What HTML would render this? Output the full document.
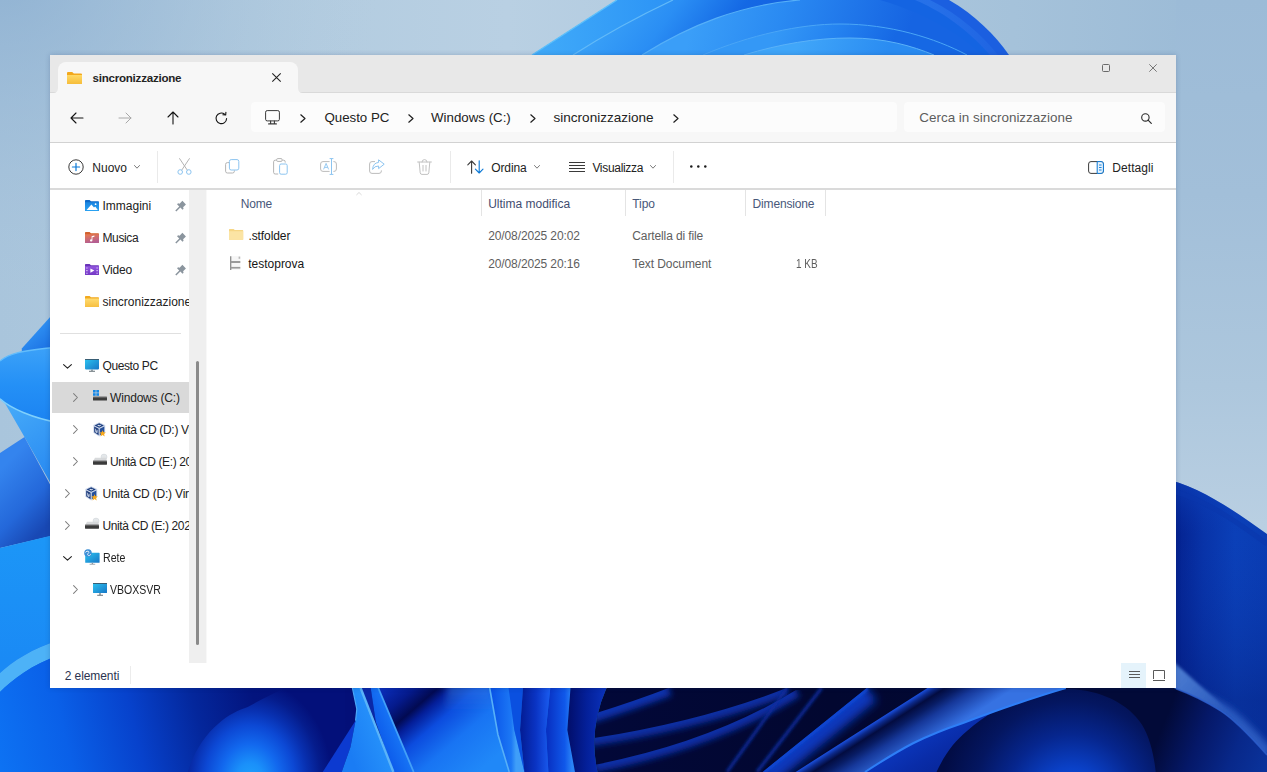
<!DOCTYPE html>
<html>
<head>
<meta charset="utf-8">
<title>sincronizzazione</title>
<style>
*{box-sizing:border-box;margin:0;padding:0}
html,body{width:1267px;height:772px;overflow:hidden}
body{position:relative;background:#aac6dd;font-family:"Liberation Sans",sans-serif;font-size:12px;color:#222}
.abs{position:absolute}
#wall{position:absolute;left:0;top:0}
#win{position:absolute;left:50px;top:55px;width:1126px;height:633px;background:#fff;overflow:hidden;box-shadow:0 0 5px rgba(20,40,90,0.22)}
#titlebar{position:absolute;left:0;top:0;width:1126px;height:37px;background:#e8e8e8}
#tab{position:absolute;left:8px;top:7px;width:240px;height:32px;background:#f7f7f7;border-radius:8px 8px 0 0}
#navbar{position:absolute;left:0;top:37px;width:1126px;height:51px;background:#f7f7f7;border-top:1px solid #d9d9d9;border-bottom:1px solid #d2d2d2}
#toolbar{position:absolute;left:0;top:88px;width:1126px;height:47px;background:#fff;border-bottom:2px solid #dadada}
.t{position:absolute;white-space:pre;line-height:1}
.side .t{color:#222}
svg{position:absolute;overflow:visible}
</style>
</head>
<body>
<svg id="wall" width="1267" height="772" viewBox="0 0 1267 772">
<defs>
<linearGradient id="bg" x1="0" y1="0" x2="1" y2="0">
<stop offset="0" stop-color="#a9c5dc"/><stop offset="0.2" stop-color="#b1cbdf"/><stop offset="0.4" stop-color="#b9d0e3"/><stop offset="0.8" stop-color="#a5c2da"/><stop offset="0.93" stop-color="#9dbcd7"/><stop offset="1" stop-color="#9cbbd7"/>
</linearGradient>
<radialGradient id="bgV" gradientUnits="userSpaceOnUse" cx="0" cy="-40" r="380"><stop offset="0" stop-color="#86abcf" stop-opacity="0.75"/><stop offset="0.45" stop-color="#94b5d4" stop-opacity="0.4"/><stop offset="1" stop-color="#b0c8de" stop-opacity="0"/></radialGradient>
<linearGradient id="bgR" x1="0" y1="0" x2="0" y2="1"><stop offset="0" stop-color="#9cbbd7"/><stop offset="0.25" stop-color="#a2bfd9"/><stop offset="0.5" stop-color="#adc7dd"/><stop offset="0.68" stop-color="#b9cfe2"/><stop offset="1" stop-color="#b9cfe2"/></linearGradient>
<linearGradient id="tp1" gradientUnits="userSpaceOnUse" x1="540" y1="0" x2="1000" y2="0"><stop offset="0" stop-color="#40aaf9"/><stop offset="0.25" stop-color="#2e96f6"/><stop offset="0.6" stop-color="#2478ec"/><stop offset="0.85" stop-color="#2670e8"/><stop offset="1" stop-color="#1f64e2"/></linearGradient>
<linearGradient id="tp2" gradientUnits="userSpaceOnUse" x1="610" y1="5" x2="720" y2="85"><stop offset="0" stop-color="#3aa2f8"/><stop offset="0.4" stop-color="#2a8ef4"/><stop offset="0.8" stop-color="#1468e4"/><stop offset="1" stop-color="#1464e2"/></linearGradient>
<linearGradient id="tp3" gradientUnits="userSpaceOnUse" x1="700" y1="0" x2="900" y2="60"><stop offset="0" stop-color="#3a9ef8"/><stop offset="0.4" stop-color="#2a8af2"/><stop offset="1" stop-color="#1664e2"/></linearGradient>
<linearGradient id="tp4" gradientUnits="userSpaceOnUse" x1="780" y1="24" x2="880" y2="70"><stop offset="0" stop-color="#3498f6"/><stop offset="0.5" stop-color="#2482f0"/><stop offset="1" stop-color="#1668e4"/></linearGradient>
<linearGradient id="tp5" gradientUnits="userSpaceOnUse" x1="800" y1="38" x2="880" y2="70"><stop offset="0" stop-color="#40a6f9"/><stop offset="1" stop-color="#2a8cf2"/></linearGradient>
</defs>
<rect width="1267" height="772" fill="url(#bg)"/>
<rect x="1176" y="0" width="91" height="772" fill="url(#bgR)"/>
<rect x="0" y="0" width="500" height="450" fill="url(#bgV)"/>
<!-- top bloom -->
<path d="M532,55 L617,0 L949,0 C975,15 995,35 1009,55 Z" fill="#1b5fe0"/>
<path d="M532,55 L617,0 L930,0 C960,15 982,35 998,55 Z" fill="url(#tp1)"/>
<path d="M573,55 Q620,25 673,0 L915,0 C950,15 972,35 990,55 Z" fill="url(#tp2)"/>
<path d="M642,55 C690,25 740,5 800,0 L 880,0 C930,15 960,35 982,55 Z" fill="url(#tp3)"/>
<path d="M703,55 C750,35 800,24 840,24 C890,24 935,38 967,55 Z" fill="url(#tp4)"/>
<path d="M744,55 C780,44 815,38 850,38 C885,38 912,46 934,55 Z" fill="url(#tp5)"/>
<path d="M573,55 Q620,25 673,0" fill="none" stroke="#62baf9" stroke-width="1.2"/>
<path d="M642,55 C690,25 740,5 800,0" fill="none" stroke="#56b0f8" stroke-width="1.2"/>
<path d="M703,55 C750,35 800,24 840,24 C890,24 935,38 967,55" fill="none" stroke="#4aa6f7" stroke-width="1"/>
<path d="M744,55 C780,44 815,38 850,38 C885,38 912,46 934,55" fill="none" stroke="#5ab2f9" stroke-width="1"/>
<path d="M532,55 L617,0" fill="none" stroke="#5cc0fb" stroke-width="1.4"/>
<g id="bottom">
<defs>
<linearGradient id="bA" gradientUnits="userSpaceOnUse" x1="0" y1="765" x2="340" y2="685">
<stop offset="0" stop-color="#0d72f3"/><stop offset="0.2" stop-color="#0a60e8"/><stop offset="0.4" stop-color="#0742cc"/><stop offset="0.58" stop-color="#04279c"/><stop offset="0.75" stop-color="#03147e"/><stop offset="1" stop-color="#030f78"/>
</linearGradient>
<radialGradient id="dome" gradientUnits="userSpaceOnUse" cx="250" cy="780" r="100" gradientTransform="translate(250 780) scale(0.82 1) translate(-250 -780)">
<stop offset="0" stop-color="#1ea2fc"/><stop offset="0.17" stop-color="#1a90fa"/><stop offset="0.36" stop-color="#1268ee"/><stop offset="0.55" stop-color="#0c48d4"/><stop offset="0.7" stop-color="#0830b0"/><stop offset="0.86" stop-color="#051c8c"/><stop offset="1" stop-color="#03107a"/>
</radialGradient>
<linearGradient id="bAt" gradientUnits="userSpaceOnUse" x1="0" y1="688" x2="0" y2="700"><stop offset="0" stop-color="#03107a" stop-opacity="0.55"/><stop offset="1" stop-color="#03107a" stop-opacity="0"/></linearGradient>
<linearGradient id="pA" gradientUnits="userSpaceOnUse" x1="345" y1="740" x2="385" y2="725"><stop offset="0" stop-color="#1a7cf4"/><stop offset="0.8" stop-color="#2590fa"/><stop offset="1" stop-color="#58b2f9"/></linearGradient>
<linearGradient id="pB" gradientUnits="userSpaceOnUse" x1="378" y1="740" x2="402" y2="730"><stop offset="0" stop-color="#0b58ea"/><stop offset="0.75" stop-color="#1672f4"/><stop offset="1" stop-color="#46a2f8"/></linearGradient>
<linearGradient id="pC" gradientUnits="userSpaceOnUse" x1="392" y1="677" x2="476" y2="774"><stop offset="0" stop-color="#0b30c0"/><stop offset="0.18" stop-color="#051a8c"/><stop offset="0.3" stop-color="#020a52"/><stop offset="0.37" stop-color="#041e98"/><stop offset="0.5" stop-color="#0c4cde"/><stop offset="0.7" stop-color="#1874f3"/><stop offset="1" stop-color="#2088f8"/></linearGradient>
<linearGradient id="pCt" gradientUnits="userSpaceOnUse" x1="0" y1="688" x2="0" y2="712"><stop offset="0" stop-color="#3a8ae8" stop-opacity="0.45"/><stop offset="1" stop-color="#3a8ae8" stop-opacity="0"/></linearGradient>
<linearGradient id="pD" gradientUnits="userSpaceOnUse" x1="492" y1="0" x2="516" y2="0"><stop offset="0" stop-color="#0a54e8"/><stop offset="0.8" stop-color="#1c78f5"/><stop offset="1" stop-color="#3f9ef8"/></linearGradient>
<linearGradient id="pF" gradientUnits="userSpaceOnUse" x1="522" y1="0" x2="550" y2="0"><stop offset="0" stop-color="#041e98"/><stop offset="0.5" stop-color="#0a34c4"/><stop offset="1" stop-color="#1a5cf0"/></linearGradient>
<linearGradient id="pG" gradientUnits="userSpaceOnUse" x1="548" y1="0" x2="572" y2="0"><stop offset="0" stop-color="#0832c4"/><stop offset="0.7" stop-color="#1058ea"/><stop offset="1" stop-color="#2a84f6"/></linearGradient>
<linearGradient id="pH" gradientUnits="userSpaceOnUse" x1="570" y1="0" x2="604" y2="0"><stop offset="0" stop-color="#021070"/><stop offset="0.5" stop-color="#04209a"/><stop offset="1" stop-color="#0a30b8"/></linearGradient>
<linearGradient id="dk" gradientUnits="userSpaceOnUse" x1="600" y1="0" x2="1267" y2="0"><stop offset="0" stop-color="#020838"/><stop offset="0.35" stop-color="#020730"/><stop offset="1" stop-color="#020a3a"/></linearGradient>
<linearGradient id="st1" gradientUnits="userSpaceOnUse" x1="0" y1="690" x2="0" y2="772"><stop offset="0" stop-color="#0a2ea8"/><stop offset="1" stop-color="#061c80"/></linearGradient>
<linearGradient id="wedge" gradientUnits="userSpaceOnUse" x1="900" y1="740" x2="930" y2="790"><stop offset="0" stop-color="#0b38c0"/><stop offset="0.5" stop-color="#092ca8"/><stop offset="1" stop-color="#072494"/></linearGradient>
<linearGradient id="pet78" gradientUnits="userSpaceOnUse" x1="861.5" y1="730" x2="886.7" y2="769.6"><stop offset="0" stop-color="#1a50e0"/><stop offset="0.09" stop-color="#0c2a8c"/><stop offset="0.2" stop-color="#030c40"/><stop offset="0.36" stop-color="#081c64"/><stop offset="0.55" stop-color="#16389a"/><stop offset="0.75" stop-color="#2452bc"/><stop offset="0.92" stop-color="#3068d8"/><stop offset="1" stop-color="#3672e2"/></linearGradient>
<linearGradient id="band6" gradientUnits="userSpaceOnUse" x1="790" y1="720" x2="850" y2="760"><stop offset="0" stop-color="#0d44d6"/><stop offset="0.5" stop-color="#072a9c"/><stop offset="1" stop-color="#020a40"/></linearGradient>
<linearGradient id="band7" gradientUnits="userSpaceOnUse" x1="850" y1="700" x2="905" y2="770"><stop offset="0" stop-color="#061c78"/><stop offset="0.5" stop-color="#0c3cc0"/><stop offset="0.85" stop-color="#1a5ce4"/><stop offset="1" stop-color="#2f80f6"/></linearGradient>
<linearGradient id="band8" gradientUnits="userSpaceOnUse" x1="930" y1="688" x2="960" y2="760"><stop offset="0" stop-color="#1c48c0"/><stop offset="0.45" stop-color="#2c62dc"/><stop offset="0.9" stop-color="#3676ea"/><stop offset="1" stop-color="#2c7af6"/></linearGradient>
<radialGradient id="ball" gradientUnits="userSpaceOnUse" cx="1072" cy="800" r="132"><stop offset="0" stop-color="#0e5aea"/><stop offset="0.25" stop-color="#0a40c6"/><stop offset="0.5" stop-color="#06268e"/><stop offset="0.75" stop-color="#041660"/><stop offset="1" stop-color="#020c44"/></radialGradient>
</defs>
<!-- base left -->
<rect x="0" y="640" width="440" height="132" fill="url(#bA)"/>

<path d="M187.8,772 C194,752 204,736 218,724 C229,714 239,710 247.7,707 C262,699 272,694 285,688 L345,688 L345,772 Z" fill="url(#dome)"/>
<!-- region right of ridge2 with crease -->
<path d="M378,688 L606,688 L598,772 L413,772 Z" fill="url(#pC)"/>
<path d="M448,684 L490,684 L493,712 L444,712 Z" fill="url(#pCt)" filter="url(#bl3)"/>
<!-- sliver -->
<path d="M322.7,772 L355.6,720.6 L350.5,747 L341.7,772 Z" fill="#0c3ad0"/>
<!-- petal A -->
<path d="M352.4,688 L360.6,688 L393.4,772 L341.7,772 L350.5,747 L355.6,720.6 L356.8,709 Z" fill="url(#pA)"/>
<!-- dark sliver between -->
<path d="M360.6,688 L370.7,688 L375.8,722 Z" fill="#0a28a8"/>
<!-- petal B -->
<path d="M370.7,688 L378.3,688 L413.7,772 L393.4,772 L375.8,722 Z" fill="url(#pB)"/>
<path d="M360.6,688 L393.4,772" fill="none" stroke="#5ab4f9" stroke-width="2.4"/>
<path d="M378.3,688 L413.7,772" fill="none" stroke="#42a0f8" stroke-width="1.8"/>
<path d="M352.4,688 L356.8,709 L355.6,720.6" fill="none" stroke="#4aa8f8" stroke-width="1.2"/>
<!-- petal D -->
<path d="M489.7,688 L508.6,688 L514.3,730 L524.4,772 L509.2,772 L497.9,734.5 Z" fill="url(#pD)"/>
<path d="M489.7,688 L497.9,734.5 L509.2,772" fill="none" stroke="#56b0f8" stroke-width="1.6"/>
<!-- petal E -->
<path d="M508.6,688 L523,688 L520,730 L524.4,772 L514.3,730 Z" fill="#0a50e0"/>
<!-- petal F -->
<path d="M523,688 L550.3,688 L545.9,730 L548.4,772 L524.4,772 L520,730 Z" fill="url(#pF)"/>
<!-- petal G -->
<path d="M550.3,688 L570.5,688 L567.3,730 L575,772 L548.4,772 L545.9,730 Z" fill="url(#pG)"/>
<!-- petal H -->
<path d="M570.5,688 L606.5,688 Q588,730 597.6,772 L575,772 L567.3,730 Z" fill="url(#pH)"/>
<!-- dark region -->
<path d="M606.5,688 Q588,730 597.6,772 L1267,772 L1267,640 L606.5,640 Z" fill="url(#dk)"/>
<!-- streaks -->
<defs>
<filter id="bl3" x="-20%" y="-50%" width="140%" height="200%"><feGaussianBlur stdDeviation="3.2"/></filter>
<filter id="bl2" x="-20%" y="-50%" width="140%" height="200%"><feGaussianBlur stdDeviation="1.6"/></filter>
<filter id="bl5" x="-30%" y="-30%" width="160%" height="160%"><feGaussianBlur stdDeviation="5"/></filter>
<filter id="bl6" x="-30%" y="-30%" width="160%" height="160%"><feGaussianBlur stdDeviation="7"/></filter>
<clipPath id="cDark"><path d="M606.5,688 Q588,730 597.6,772 L1267,772 L1267,688 Z"/></clipPath>
<clipPath id="cs1"><path d="M590,715 Q635,701 668.6,688 L900,688 L900,772 L590,772 Z"/></clipPath>
<clipPath id="cs2"><path d="M588,739 Q700,722 786.6,688 L900,688 L900,772 L588,772 Z"/></clipPath>
<clipPath id="cs3"><path d="M594,765 Q712,742 796,690 L900,688 L900,772 L594,772 Z"/></clipPath>
<clipPath id="cb6"><path d="M762.6,772 L866.8,688 L927.5,688 L795.6,772 Z"/></clipPath>
<clipPath id="cb7"><path d="M864,772 Q900,750 940,734 Q995,708 1075,688 L800,688 L800,772 Z"/></clipPath>
<clipPath id="cb9"><path d="M864,772 Q900,750 940,734 Q995,708 1075,688 L1267,688 L1267,772 Z"/></clipPath>
</defs>
<g clip-path="url(#cDark)">
<g clip-path="url(#cs1)"><path d="M590,715 Q635,701 668.6,688" fill="none" stroke="#0b32ac" stroke-width="16" filter="url(#bl3)"/></g>
<g clip-path="url(#cs2)"><path d="M588,739 Q700,722 786.6,688" fill="none" stroke="#0a2ea2" stroke-width="15" filter="url(#bl3)"/></g>
<g clip-path="url(#cs3)"><path d="M594,765 Q712,742 796,690" fill="none" stroke="#0a2ea4" stroke-width="15" filter="url(#bl3)"/></g>
<path d="M727,772 L787,688" fill="none" stroke="#0a2c9c" stroke-width="3" filter="url(#bl2)"/>
<path d="M757,772 L821.6,688" fill="none" stroke="#0a2c9c" stroke-width="3" filter="url(#bl2)"/>
<g clip-path="url(#cb6)"><path d="M762.6,772 L866.8,688" fill="none" stroke="#0b38bc" stroke-width="32" filter="url(#bl5)"/><path d="M762.6,772 L866.8,688" fill="none" stroke="#0f46d2" stroke-width="6" filter="url(#bl2)"/></g>
<!-- wedge below bright edge -->
<path d="M865,772 C885,759 900,750 913.6,743 C930,735 945,729 963,723 C1000,709 1035,697 1065.7,688 L1072,772 Z" fill="url(#wedge)"/>
</g>
<!-- ball -->

</g>

<g id="right">
<defs>
<linearGradient id="rA" gradientUnits="userSpaceOnUse" x1="1176" y1="0" x2="1267" y2="0"><stop offset="0" stop-color="#042290"/><stop offset="0.3" stop-color="#0833a8"/><stop offset="0.65" stop-color="#0b40b8"/><stop offset="1" stop-color="#0a3cb2"/></linearGradient>
<linearGradient id="rAv" gradientUnits="userSpaceOnUse" x1="0" y1="480" x2="0" y2="700"><stop offset="0" stop-color="#0f4ac8" stop-opacity="0.55"/><stop offset="0.25" stop-color="#0a38b0" stop-opacity="0"/><stop offset="1" stop-color="#021468" stop-opacity="0.35"/></linearGradient>
<linearGradient id="rB" gradientUnits="userSpaceOnUse" x1="1165" y1="720" x2="1267" y2="760"><stop offset="0" stop-color="#020a38"/><stop offset="0.35" stop-color="#051868"/><stop offset="0.7" stop-color="#08288a"/><stop offset="1" stop-color="#0a329a"/></linearGradient>
<linearGradient id="rC" gradientUnits="userSpaceOnUse" x1="1176" y1="675" x2="1240" y2="725"><stop offset="0" stop-color="#4a7ad0"/><stop offset="0.5" stop-color="#3464c4"/><stop offset="1" stop-color="#1c4cb4"/></linearGradient>
<clipPath id="crC"><path d="M1100,672 C1130,676 1160,682 1176,688.8 C1190,694 1205,701 1220.7,710.9 C1235,720 1250,736 1267,755 L1267,600 L1100,600 Z"/></clipPath>
</defs>
<path d="M1160,478 C1200,485 1240,515 1267,534 L1267,772 L1160,772 Z" fill="url(#rA)"/>
<path d="M1160,478 C1200,485 1240,515 1267,534 L1267,772 L1160,772 Z" fill="url(#rAv)"/>
<path d="M1160,488 C1200,495 1240,524 1267,544" fill="none" stroke="#0a36ac" stroke-width="5" opacity="0.5"/>
<path d="M1100,672 C1130,676 1160,682 1176,688.8 C1190,694 1205,701 1220.7,710.9 C1235,720 1250,736 1267,755 L1267,772 L1100,772 Z" fill="url(#rB)"/>
<g clip-path="url(#crC)">
<path d="M1100,672 C1130,676 1160,682 1176,688.8 C1190,694 1205,701 1220.7,710.9 C1235,720 1250,736 1267,755" fill="none" stroke="#2a5ac0" stroke-width="16" filter="url(#bl3)"/>
<path d="M1150,642 L1176,664 L1215,699 L1237,723 L1220.7,711.5 C1205,702 1190,695 1176,689.5 L1150,680 Z" fill="url(#rC)" filter="url(#bl2)"/>
</g>
<path d="M1176,688.8 C1190,694 1205,701 1220.7,710.9 C1235,720 1250,736 1267,755" fill="none" stroke="#2c5ecc" stroke-width="1.6" opacity="0.8"/>
<path d="M936.5,772 C946,752 955,741 967,731 C976,723 985,716 996,710.7 C1020,698 1045,690 1069,689 C1100,690 1128,703 1142,724.7 C1150,738 1154,755 1155.7,772 Z" fill="url(#ball)"/>
<!-- petal 7/8 over ball -->
<path d="M795.6,772 L927.5,688 L1065.7,688 C1035,697 1000,709 963,723 C945,729 930,735 913.6,743 C900,750 885,759 865,772 Z" fill="url(#pet78)"/>
<path d="M865,772 C885,759 900,750 913.6,743 C930,735 945,729 963,723 C1000,709 1035,697 1065.7,688" fill="none" stroke="#2e7ef6" stroke-width="2"/>
</g>

<g id="left">
<defs>
<linearGradient id="lA" gradientUnits="userSpaceOnUse" x1="30" y1="325" x2="50" y2="350"><stop offset="0" stop-color="#3397f6"/><stop offset="1" stop-color="#1a6fe2"/></linearGradient>
<linearGradient id="lB" gradientUnits="userSpaceOnUse" x1="0" y1="350" x2="0" y2="420"><stop offset="0" stop-color="#3aa0f8"/><stop offset="0.5" stop-color="#2490f6"/><stop offset="1" stop-color="#1c84f2"/></linearGradient>
<linearGradient id="lC" gradientUnits="userSpaceOnUse" x1="10" y1="410" x2="50" y2="470"><stop offset="0" stop-color="#44a8f8"/><stop offset="1" stop-color="#2a8cf2"/></linearGradient>
<linearGradient id="lD" gradientUnits="userSpaceOnUse" x1="0" y1="470" x2="52" y2="520"><stop offset="0" stop-color="#3484ee"/><stop offset="0.6" stop-color="#2468da"/><stop offset="1" stop-color="#1848b4"/></linearGradient>
<linearGradient id="lE" gradientUnits="userSpaceOnUse" x1="0" y1="540" x2="0" y2="660"><stop offset="0" stop-color="#1c96f7"/><stop offset="1" stop-color="#1a8af5"/></linearGradient>
<linearGradient id="lG" gradientUnits="userSpaceOnUse" x1="0" y1="670" x2="0" y2="772"><stop offset="0" stop-color="#0c74f4"/><stop offset="1" stop-color="#0b6cf2"/></linearGradient>
</defs>
<path d="M60,306 L21.8,348.5 L21.8,352 L60,352 Z" fill="url(#lA)"/>
<path d="M0,361 C8,354.5 18,350.5 60,347 L60,423 C32,418 10,408 0,398.8 Z" fill="url(#lB)"/>
<path d="M0,361 C8,354.5 18,350.5 60,347" fill="none" stroke="#63bdfb" stroke-width="1.3"/>
<path d="M0,398.8 C10,408 32,418 60,423 L60,500 L24.5,437 L5.4,404 Z" fill="url(#lC)"/>
<path d="M0,398.8 C10,408 32,418 60,423" fill="none" stroke="#7fd0fc" stroke-width="1.5"/>
<path d="M0,453 L24.5,437 L60,503 L60,534 L0,548 Z" fill="url(#lD)"/>
<path d="M0,548 L60,533.5 L60,640 C32,648 12,662 0,673 Z" fill="url(#lE)"/>
<path d="M0,673 C12,662 32,648 60,640 L60,655 C32,664 12,680 0,692 Z" fill="#4db2f7"/>
<path d="M0,692 C12,680 32,664 60,655 L60,772 L0,772 Z" fill="url(#bA)"/>
</g>

</svg>

<div id="win">
<div id="titlebar"></div>
<div id="navbar"></div>
<div id="tab"></div>
<div id="toolbar"></div>
<!-- coordinates inside #win are page coords minus (50,55) -->
<!-- tab flares -->
<svg style="left:3px;top:33px" width="5" height="5" viewBox="0 0 5 5"><path d="M5,0 L5,5 L0,5 Q5,5 5,0 Z" fill="#f7f7f7"/></svg>
<svg style="left:248px;top:33px" width="5" height="5" viewBox="0 0 5 5"><path d="M0,0 L0,5 L5,5 Q0,5 0,0 Z" fill="#f7f7f7"/></svg>
<!-- tab folder icon -->
<svg style="left:17px;top:16.5px" width="15" height="12" viewBox="0 0 15 12">
<defs><linearGradient id="fg1" x1="0" y1="0" x2="0" y2="1"><stop offset="0" stop-color="#ffd966"/><stop offset="1" stop-color="#f6bd3a"/></linearGradient></defs>
<path d="M0,1 Q0,0 1,0 L5.2,0 L6.8,1.4 L14,1.4 Q15,1.4 15,2.4 L15,11 Q15,12 14,12 L1,12 Q0,12 0,11 Z" fill="#f3a81c"/>
<path d="M0,3 L15,3 L15,11 Q15,12 14,12 L1,12 Q0,12 0,11 Z" fill="url(#fg1)"/>
</svg>
<div class="t" id="tabtitle" style="left:42.5px;top:16.8px;font-weight:bold;font-size:11.6px;letter-spacing:-0.25px;color:#242424">sincronizzazione</div>
<svg style="left:222px;top:18px" width="9" height="9" viewBox="0 0 9 9"><path d="M0.3,0.3 L8.7,8.7 M8.7,0.3 L0.3,8.7" stroke="#222" stroke-width="1.1" fill="none"/></svg>
<!-- window controls -->
<svg style="left:1052px;top:9px" width="8" height="8" viewBox="0 0 8 8"><rect x="0.5" y="0.5" width="7" height="7" rx="1" fill="none" stroke="#6a6a6a" stroke-width="1"/></svg>
<svg style="left:1099px;top:9px" width="8" height="8" viewBox="0 0 8 8"><path d="M0.3,0.3 L7.7,7.7 M7.7,0.3 L0.3,7.7" stroke="#777" stroke-width="1" fill="none"/></svg>
<!-- nav icons -->
<svg style="left:20px;top:56.5px" width="14" height="12" viewBox="0 0 14 12"><path d="M13,6 L1,6 M6,1 L1,6 L6,11" stroke="#141414" stroke-width="1.1" fill="none" stroke-linecap="round" stroke-linejoin="round"/></svg>
<svg style="left:68px;top:56.5px" width="14" height="12" viewBox="0 0 14 12"><path d="M1,6 L13,6 M8,1 L13,6 L8,11" stroke="#a8a8a8" stroke-width="1" fill="none" stroke-linecap="round" stroke-linejoin="round"/></svg>
<svg style="left:116.5px;top:55.5px" width="12" height="14" viewBox="0 0 12 14"><path d="M6,13 L6,1 M1,6 L6,1 L11,6" stroke="#141414" stroke-width="1.1" fill="none" stroke-linecap="round" stroke-linejoin="round"/></svg>
<svg style="left:164.5px;top:56.5px" width="13" height="13" viewBox="0 0 13 13"><path d="M11.6,6.5 A5.3,5.3 0 1 1 9.6,2.2" stroke="#141414" stroke-width="1.1" fill="none" stroke-linecap="round"/><path d="M7.6,2.4 L10.4,2.6 L10.6,0" stroke="#141414" stroke-width="1.1" fill="none" stroke-linecap="round" stroke-linejoin="round" transform="translate(0.3,0.3)"/></svg>
<!-- address bar -->
<div class="abs" style="left:201px;top:46.5px;width:646px;height:30.6px;background:#fcfcfc;border-radius:4px"></div>
<svg style="left:214.5px;top:55px" width="15" height="15" viewBox="0 0 15 15"><rect x="0.6" y="0.6" width="13.8" height="10.3" rx="1.6" fill="none" stroke="#3a3a3a" stroke-width="1"/><path d="M5.6,11 L5.6,13.6 M9.4,11 L9.4,13.6 M3.6,13.9 L11.4,13.9" stroke="#3a3a3a" stroke-width="1.1" fill="none" stroke-linecap="round"/></svg>
<svg class="chv" style="left:250px;top:58.5px" width="6" height="9" viewBox="0 0 6 9"><path d="M0.8,0.8 L5,4.5 L0.8,8.2" stroke="#1f1f1f" stroke-width="1.2" fill="none" stroke-linecap="round" stroke-linejoin="round"/></svg>
<div class="t addr" style="left:274.4px;top:56px;font-size:13.3px">Questo PC</div>
<svg class="chv" style="left:357.5px;top:58.5px" width="6" height="9" viewBox="0 0 6 9"><path d="M0.8,0.8 L5,4.5 L0.8,8.2" stroke="#1f1f1f" stroke-width="1.2" fill="none" stroke-linecap="round" stroke-linejoin="round"/></svg>
<div class="t addr" style="left:381px;top:56px;font-size:13.3px">Windows (C:)</div>
<svg class="chv" style="left:479.5px;top:58.5px" width="6" height="9" viewBox="0 0 6 9"><path d="M0.8,0.8 L5,4.5 L0.8,8.2" stroke="#1f1f1f" stroke-width="1.2" fill="none" stroke-linecap="round" stroke-linejoin="round"/></svg>
<div class="t addr" style="left:503.5px;top:56px;font-size:13.55px">sincronizzazione</div>
<svg class="chv" style="left:623px;top:58.5px" width="6" height="9" viewBox="0 0 6 9"><path d="M0.8,0.8 L5,4.5 L0.8,8.2" stroke="#1f1f1f" stroke-width="1.2" fill="none" stroke-linecap="round" stroke-linejoin="round"/></svg>
<!-- search -->
<div class="abs" style="left:854px;top:46.5px;width:261px;height:30.6px;background:#fcfcfc;border-radius:4px"></div>
<div class="t" style="left:869.3px;top:56px;font-size:13.45px;color:#5c5c5c">Cerca in sincronizzazione</div>
<svg style="left:1090.5px;top:57.5px" width="11" height="11" viewBox="0 0 11 11"><circle cx="4.4" cy="4.4" r="3.7" fill="none" stroke="#2a2a2a" stroke-width="1.1"/><path d="M7.1,7.1 L10.3,10.3" stroke="#2a2a2a" stroke-width="1.2" stroke-linecap="round"/></svg>
<!-- toolbar: win coords -->
<svg style="left:17.5px;top:103.7px" width="16" height="16" viewBox="0 0 16 16"><circle cx="8" cy="8" r="7.2" fill="none" stroke="#3a3a3a" stroke-width="1"/><path d="M8,4.4 L8,11.6 M4.4,8 L11.6,8" stroke="#0a78d6" stroke-width="1.2" stroke-linecap="round"/></svg>
<div class="t" style="left:42.3px;top:106.5px">Nuovo</div>
<svg style="left:84px;top:110px" width="6" height="4" viewBox="0 0 6 4"><path d="M0.5,0.5 L3,3.2 L5.5,0.5" stroke="#6a6a6a" stroke-width="0.9" fill="none" stroke-linecap="round" stroke-linejoin="round"/></svg>
<div class="abs" style="left:107px;top:96px;width:1px;height:32px;background:#eaeaea"></div>
<!-- cut -->
<svg style="left:126.5px;top:103px" width="15" height="17" viewBox="0 0 15 17"><path d="M2.6,0.6 L10.2,12 M12.4,0.6 L4.8,12" stroke="#b4b4b4" stroke-width="1" fill="none" stroke-linecap="round"/><circle cx="3.2" cy="14" r="2.3" fill="none" stroke="#8cc4f0" stroke-width="1"/><circle cx="11.8" cy="14" r="2.3" fill="none" stroke="#8cc4f0" stroke-width="1"/></svg>
<!-- copy -->
<svg style="left:175px;top:104px" width="15" height="15" viewBox="0 0 15 15"><path d="M4,3.6 L2.4,3.6 Q0.6,3.6 0.6,5.4 L0.6,12.2 Q0.6,14 2.4,14 L7.6,14 Q9.4,14 9.4,12.2 L9.4,11.4" fill="none" stroke="#b4b4b4" stroke-width="1"/><rect x="4.4" y="0.6" width="9.4" height="10.4" rx="1.8" fill="none" stroke="#8cc4f0" stroke-width="1"/></svg>
<!-- paste -->
<svg style="left:222.5px;top:103px" width="15" height="17" viewBox="0 0 15 17"><path d="M5.2,16 L2.2,16 Q0.6,16 0.6,14.4 L0.6,3.8 Q0.6,2.2 2.2,2.2 L3.4,2.2 M9.4,2.2 L10.6,2.2 Q12.2,2.2 12.2,3.8 L12.2,4.6" fill="none" stroke="#b4b4b4" stroke-width="1"/><rect x="3.6" y="0.6" width="5.6" height="2.8" rx="1.2" fill="none" stroke="#b4b4b4" stroke-width="1"/><rect x="6.6" y="6" width="7.6" height="10.2" rx="1.5" fill="none" stroke="#8cc4f0" stroke-width="1"/></svg>
<!-- rename -->
<svg style="left:270px;top:103px" width="17" height="17" viewBox="0 0 17 17"><path d="M9.6,3.6 L3,3.6 Q0.6,3.6 0.6,6 L0.6,11 Q0.6,13.4 3,13.4 L9.6,13.4 M13.4,3.6 L14,3.6 Q16.4,3.6 16.4,6 L16.4,11 Q16.4,13.4 14,13.4 L13.4,13.4" fill="none" stroke="#bcbcbc" stroke-width="1"/><path d="M11.5,0.8 L11.5,16.2 M9.6,0.6 L13.4,0.6 M9.6,16.4 L13.4,16.4" stroke="#8cc4f0" stroke-width="1" fill="none"/><path d="M3.6,11.4 L6.1,5.4 L8.6,11.4 M4.5,9.4 L7.7,9.4" stroke="#8cc4f0" stroke-width="0.9" fill="none" stroke-linejoin="round"/></svg>
<!-- share -->
<svg style="left:318.5px;top:104px" width="16" height="15" viewBox="0 0 16 15"><path d="M6,2.6 L3,2.6 Q0.6,2.6 0.6,5 L0.6,12 Q0.6,14.4 3,14.4 L10,14.4 Q12.4,14.4 12.4,12 L12.4,11.4" fill="none" stroke="#bcbcbc" stroke-width="1"/><path d="M9.6,0.8 L15.2,5.2 L9.6,9.6 L9.6,7 Q5.6,6.8 3.6,10.4 Q4,4 9.6,3.4 Z" fill="none" stroke="#8cc4f0" stroke-width="1" stroke-linejoin="round"/></svg>
<!-- trash -->
<svg style="left:366.5px;top:103.5px" width="15" height="16" viewBox="0 0 15 16"><path d="M0.6,3 L14.4,3 M5,3 Q5,0.6 7.5,0.6 Q10,0.6 10,3 M2.2,3.2 L3.2,13.8 Q3.4,15.4 5,15.4 L10,15.4 Q11.6,15.4 11.8,13.8 L12.8,3.2 M6,6.4 L6,12 M9,6.4 L9,12" fill="none" stroke="#c2c2c2" stroke-width="1" stroke-linecap="round"/></svg>
<div class="abs" style="left:400px;top:96px;width:1px;height:32px;background:#eaeaea"></div>
<!-- sort -->
<svg style="left:416.5px;top:104.5px" width="17" height="14" viewBox="0 0 17 14"><path d="M4.6,13.2 L4.6,1 M0.8,4.8 L4.6,1 L8.4,4.8" fill="none" stroke="#3a3a3a" stroke-width="1.1" stroke-linecap="round" stroke-linejoin="round"/><path d="M12.2,0.8 L12.2,13 M8.4,9.2 L12.2,13 L16,9.2" fill="none" stroke="#0a78d6" stroke-width="1.1" stroke-linecap="round" stroke-linejoin="round"/></svg>
<div class="t" style="left:441.2px;top:106.5px;letter-spacing:-0.09px">Ordina</div>
<svg style="left:484px;top:110px" width="6" height="4" viewBox="0 0 6 4"><path d="M0.5,0.5 L3,3.2 L5.5,0.5" stroke="#6a6a6a" stroke-width="0.9" fill="none" stroke-linecap="round" stroke-linejoin="round"/></svg>
<!-- view -->
<svg style="left:519px;top:107px" width="16" height="10" viewBox="0 0 16 10"><path d="M0,0.5 L16,0.5 M0,3.5 L16,3.5 M0,6.5 L16,6.5 M0,9.5 L16,9.5" stroke="#3a3a3a" stroke-width="1"/></svg>
<div class="t" style="left:542.4px;top:106.5px;letter-spacing:-0.31px">Visualizza</div>
<svg style="left:600.2px;top:110px" width="6" height="4" viewBox="0 0 6 4"><path d="M0.5,0.5 L3,3.2 L5.5,0.5" stroke="#6a6a6a" stroke-width="0.9" fill="none" stroke-linecap="round" stroke-linejoin="round"/></svg>
<div class="abs" style="left:623px;top:96px;width:1px;height:32px;background:#eaeaea"></div>
<svg style="left:640px;top:110.2px" width="17" height="3" viewBox="0 0 17 3"><circle cx="1.3" cy="1.4" r="1.25" fill="#1b1b1b"/><circle cx="8.3" cy="1.4" r="1.25" fill="#1b1b1b"/><circle cx="15.3" cy="1.4" r="1.25" fill="#1b1b1b"/></svg>
<!-- details -->
<svg style="left:1038px;top:105.5px" width="16" height="13" viewBox="0 0 16 13"><rect x="0.6" y="0.6" width="14.8" height="11.8" rx="2.4" fill="none" stroke="#3a3a3a" stroke-width="1"/><path d="M9.2,0.6 L13,0.6 Q15.4,0.6 15.4,3 L15.4,10 Q15.4,12.4 13,12.4 L9.2,12.4 Z" fill="#e8f3fc" stroke="#0a78d6" stroke-width="1"/><path d="M11,4 L13.6,4 M11,6.5 L13.6,6.5 M11,9 L13.6,9" stroke="#0a78d6" stroke-width="0.9"/></svg>
<div class="t" style="left:1062.2px;top:106.5px;letter-spacing:0.09px">Dettagli</div>

<!-- sidebar container: win x 0..139, y 135..608 ; inner coords = page - (50,190) -->
<div id="side" class="abs side" style="left:0;top:135px;width:139px;height:473px;overflow:hidden">
<svg width="0" height="0" style="left:0;top:0"><defs>
<linearGradient id="gFold" x1="0" y1="0" x2="0" y2="1"><stop offset="0" stop-color="#ffdc72"/><stop offset="1" stop-color="#f7bf40"/></linearGradient>
<linearGradient id="gImg" x1="0" y1="0" x2="0" y2="1"><stop offset="0" stop-color="#1a84e0"/><stop offset="1" stop-color="#2aa2f2"/></linearGradient>
<linearGradient id="gMus" x1="0" y1="0" x2="0.3" y2="1"><stop offset="0" stop-color="#ea7c4c"/><stop offset="1" stop-color="#b45e92"/></linearGradient>
<linearGradient id="gVid" x1="0" y1="0" x2="0" y2="1"><stop offset="0" stop-color="#9256e0"/><stop offset="1" stop-color="#7438c4"/></linearGradient>
<linearGradient id="gMon" x1="0" y1="0" x2="1" y2="1"><stop offset="0" stop-color="#2cc4f0"/><stop offset="1" stop-color="#1876c6"/></linearGradient>
</defs></svg>
<!-- Immagini row center y=15.5 -->
<svg style="left:35px;top:10px" width="14" height="11" viewBox="0 0 14 11"><path d="M0,0.8 Q0,0 0.8,0 L4.6,0 L6,1.2 L13.2,1.2 Q14,1.2 14,2 L14,10.2 Q14,11 13.2,11 L0.8,11 Q0,11 0,10.2 Z" fill="#0f6ac8"/><path d="M0,2.2 L14,2.2 L14,10.2 Q14,11 13.2,11 L0.8,11 Q0,11 0,10.2 Z" fill="url(#gImg)"/><path d="M1.6,10 L6.4,4.4 L9,7.4 L10.2,6.4 L12.8,10 Z" fill="#fff"/><circle cx="10.6" cy="4.2" r="0.9" fill="#fff"/></svg>
<div class="t" style="left:52.5px;top:9.5px">Immagini</div>
<svg class="pin" style="left:125px;top:10.5px" width="11" height="11" viewBox="0 0 11 11"><g transform="translate(5.2,5.6) rotate(45)"><path d="M-2.5,-5.6 L2.5,-5.6 L2.5,-1.6 L3.9,-0.9 L3.9,0.6 L0.75,0.6 L0.75,6.2 L-0.75,6.2 L-0.75,0.6 L-3.9,0.6 L-3.9,-0.9 L-2.5,-1.6 Z" fill="#8b959e"/></g></svg>
<!-- Musica y=47.5 -->
<svg style="left:35px;top:42px" width="14" height="11" viewBox="0 0 14 11"><path d="M0,0.8 Q0,0 0.8,0 L4.6,0 L6,1.2 L13.2,1.2 Q14,1.2 14,2 L14,10.2 Q14,11 13.2,11 L0.8,11 Q0,11 0,10.2 Z" fill="#d2622e"/><path d="M0,2.2 L14,2.2 L14,10.2 Q14,11 13.2,11 L0.8,11 Q0,11 0,10.2 Z" fill="url(#gMus)"/><path d="M6.6,4.2 L9.4,3.6 L9.4,4.8 L7.4,5.2 L7.4,8.4 A1.2,1.1 0 1 1 6.6,7.4 Z" fill="#fff"/></svg>
<div class="t" style="left:52.5px;top:41.5px;letter-spacing:-0.39px">Musica</div>
<svg class="pin" style="left:125px;top:42.5px" width="11" height="11" viewBox="0 0 11 11"><g transform="translate(5.2,5.6) rotate(45)"><path d="M-2.5,-5.6 L2.5,-5.6 L2.5,-1.6 L3.9,-0.9 L3.9,0.6 L0.75,0.6 L0.75,6.2 L-0.75,6.2 L-0.75,0.6 L-3.9,0.6 L-3.9,-0.9 L-2.5,-1.6 Z" fill="#8b959e"/></g></svg>
<!-- Video y=79.5 -->
<svg style="left:35px;top:74px" width="14" height="11" viewBox="0 0 14 11"><path d="M0,0.8 Q0,0 0.8,0 L4.6,0 L6,1.2 L13.2,1.2 Q14,1.2 14,2 L14,10.2 Q14,11 13.2,11 L0.8,11 Q0,11 0,10.2 Z" fill="#6a34b8"/><path d="M0,2.2 L14,2.2 L14,10.2 Q14,11 13.2,11 L0.8,11 Q0,11 0,10.2 Z" fill="url(#gVid)"/><path d="M5.4,4.4 L9.4,6.6 L5.4,8.8 Z" fill="#fff"/><path d="M1.2,4 L2.6,4 M1.2,6.6 L2.6,6.6 M1.2,9.2 L2.6,9.2 M11.4,4 L12.8,4 M11.4,6.6 L12.8,6.6 M11.4,9.2 L12.8,9.2" stroke="#d8c2f6" stroke-width="1.1"/></svg>
<div class="t" style="left:52.5px;top:73.5px;letter-spacing:-0.18px">Video</div>
<svg class="pin" style="left:125px;top:74.5px" width="11" height="11" viewBox="0 0 11 11"><g transform="translate(5.2,5.6) rotate(45)"><path d="M-2.5,-5.6 L2.5,-5.6 L2.5,-1.6 L3.9,-0.9 L3.9,0.6 L0.75,0.6 L0.75,6.2 L-0.75,6.2 L-0.75,0.6 L-3.9,0.6 L-3.9,-0.9 L-2.5,-1.6 Z" fill="#8b959e"/></g></svg>
<!-- sincronizzazione y=111.5 -->
<svg style="left:35px;top:106px" width="14" height="11" viewBox="0 0 14 11"><path d="M0,0.8 Q0,0 0.8,0 L4.6,0 L6,1.2 L13.2,1.2 Q14,1.2 14,2 L14,10.2 Q14,11 13.2,11 L0.8,11 Q0,11 0,10.2 Z" fill="#f2a91e"/><path d="M0,2.4 L14,2.4 L14,10.2 Q14,11 13.2,11 L0.8,11 Q0,11 0,10.2 Z" fill="url(#gFold)"/></svg>
<div class="t" style="left:52.5px;top:105.5px">sincronizzazione</div>
<!-- separator -->
<div class="abs" style="left:10px;top:143px;width:121px;height:1px;background:#e0e0e0"></div>
<!-- Questo PC y=175.5 -->
<svg style="left:13px;top:173.6px" width="9" height="5" viewBox="0 0 9 5"><path d="M0.6,0.6 L4.5,4.2 L8.4,0.6" stroke="#1f1f1f" stroke-width="1.1" fill="none" stroke-linecap="round" stroke-linejoin="round"/></svg>
<svg style="left:35px;top:169.3px" width="14" height="13" viewBox="0 0 14 13"><rect x="0" y="0" width="14" height="10.4" rx="0.8" fill="url(#gMon)"/><rect x="0" y="0" width="14" height="0.9" fill="#3a5568"/><path d="M6.3,10.4 L7.7,10.4 L7.7,11.9 L6.3,11.9 Z" fill="#7a858c"/><rect x="4" y="11.8" width="6" height="0.9" fill="#58646c"/></svg>
<div class="t" style="left:52.5px;top:169.5px;letter-spacing:-0.39px">Questo PC</div>
<!-- Windows (C:) selected y=207.5 -->
<div class="abs" style="left:2px;top:192px;width:137px;height:31px;background:#d9d9d9"></div>
<svg class="cr" style="left:23px;top:203.3px" width="5" height="9" viewBox="0 0 5 9"><path d="M0.6,0.6 L4.4,4.5 L0.6,8.4" stroke="#7d7d7d" stroke-width="1.05" fill="none" stroke-linecap="round" stroke-linejoin="round"/></svg>
<svg style="left:42.8px;top:200px" width="14" height="11" viewBox="0 0 14 11"><rect x="0" y="0" width="2.7" height="2.6" fill="#1487e6"/><rect x="3.3" y="0" width="2.7" height="2.6" fill="#1487e6"/><rect x="0" y="3.2" width="2.7" height="2.6" fill="#1487e6"/><rect x="3.3" y="3.2" width="2.7" height="2.6" fill="#1487e6"/><rect x="0" y="6.8" width="14" height="3.8" rx="0.5" fill="#3c3c3c"/><rect x="0" y="6.8" width="14" height="1" fill="#6a6a6a"/></svg>
<div class="t" style="left:60.1px;top:201.5px;letter-spacing:-0.2px">Windows (C:)</div>
<!-- Unita CD (D:) V y=239.5 -->
<svg class="cr" style="left:23px;top:235.3px" width="5" height="9" viewBox="0 0 5 9"><path d="M0.6,0.6 L4.4,4.5 L0.6,8.4" stroke="#7d7d7d" stroke-width="1.05" fill="none" stroke-linecap="round" stroke-linejoin="round"/></svg>
<svg style="left:43px;top:232px" width="13" height="15" viewBox="0 0 13 15"><path d="M6.2,0.3 L12.2,3 L12.2,10.8 L6.2,14.6 L0.3,10.8 L0.3,3 Z" fill="#cdd7ea"/><path d="M6.2,1.3 L10.9,3.4 L6.2,5.7 L1.5,3.4 Z" fill="#1e3f80"/><path d="M1.2,4.5 L5.6,6.8 L5.6,13.2 L1.2,10.3 Z" fill="#1d3c7c"/><path d="M6.8,6.8 L11.3,4.5 L11.3,10.3 L6.8,13.2 Z" fill="#27509a"/><path d="M4.2,3.2 L5.2,2.7 L6.2,3.5 L7.2,2.7 L8.2,3.2 L6.2,4.4 Z" fill="#eef3fb"/><path d="M2.2,6.6 L3,7 L3.4,9.4 L3.9,7.5 L4.6,7.9 L4.6,11 L3.9,10.6 L3.4,11.6 L2.2,9.6 Z" fill="#dfe7f5" opacity="0.85"/><path d="M9.6,8.2 L10.5,10.3 L12.8,10.5 L11.1,12 L11.7,14.4 L9.6,13.1 L7.5,14.4 L8.1,12 L6.4,10.5 L8.7,10.3 Z" fill="#f8a81a"/></svg>
<div class="t" style="left:60.1px;top:233.5px;letter-spacing:-0.31px">Unità CD (D:) VirtualBox Guest Additions</div>
<!-- Unita CD (E:) 20 y=271.5 -->
<svg class="cr" style="left:23px;top:267.3px" width="5" height="9" viewBox="0 0 5 9"><path d="M0.6,0.6 L4.4,4.5 L0.6,8.4" stroke="#7d7d7d" stroke-width="1.05" fill="none" stroke-linecap="round" stroke-linejoin="round"/></svg>
<svg style="left:42.8px;top:264px" width="14" height="11" viewBox="0 0 14 11"><ellipse cx="11" cy="3" rx="3" ry="2.9" fill="#e4e8eb" stroke="#ccd1d5" stroke-width="0.5"/><ellipse cx="11" cy="3" rx="0.9" ry="0.8" fill="#fafafa" stroke="#c8c8c8" stroke-width="0.3"/><path d="M0.2,7 L2,3.8 L13.2,3.8 L13.9,7 Z" fill="#d4d6d8" opacity="0.9"/><rect x="0" y="6.8" width="14" height="3.9" rx="0.4" fill="#3a3a3a"/><rect x="0" y="6.8" width="14" height="0.9" fill="#6e6e6e"/></svg>
<div class="t" style="left:60.1px;top:265.5px;letter-spacing:-0.4px">Unità CD (E:) 2025</div>
<!-- Unita CD (D:) Vir y=303.5 -->
<svg class="cr" style="left:15px;top:299.3px" width="5" height="9" viewBox="0 0 5 9"><path d="M0.6,0.6 L4.4,4.5 L0.6,8.4" stroke="#7d7d7d" stroke-width="1.05" fill="none" stroke-linecap="round" stroke-linejoin="round"/></svg>
<svg style="left:35px;top:296px" width="13" height="15" viewBox="0 0 13 15"><path d="M6.2,0.3 L12.2,3 L12.2,10.8 L6.2,14.6 L0.3,10.8 L0.3,3 Z" fill="#cdd7ea"/><path d="M6.2,1.3 L10.9,3.4 L6.2,5.7 L1.5,3.4 Z" fill="#1e3f80"/><path d="M1.2,4.5 L5.6,6.8 L5.6,13.2 L1.2,10.3 Z" fill="#1d3c7c"/><path d="M6.8,6.8 L11.3,4.5 L11.3,10.3 L6.8,13.2 Z" fill="#27509a"/><path d="M4.2,3.2 L5.2,2.7 L6.2,3.5 L7.2,2.7 L8.2,3.2 L6.2,4.4 Z" fill="#eef3fb"/><path d="M2.2,6.6 L3,7 L3.4,9.4 L3.9,7.5 L4.6,7.9 L4.6,11 L3.9,10.6 L3.4,11.6 L2.2,9.6 Z" fill="#dfe7f5" opacity="0.85"/><path d="M9.6,8.2 L10.5,10.3 L12.8,10.5 L11.1,12 L11.7,14.4 L9.6,13.1 L7.5,14.4 L8.1,12 L6.4,10.5 L8.7,10.3 Z" fill="#f8a81a"/></svg>
<div class="t" style="left:52.5px;top:297.5px;letter-spacing:-0.2px">Unità CD (D:) VirtualBox Guest Additions</div>
<!-- Unita CD (E:) 202 y=335.5 -->
<svg class="cr" style="left:15px;top:331.3px" width="5" height="9" viewBox="0 0 5 9"><path d="M0.6,0.6 L4.4,4.5 L0.6,8.4" stroke="#7d7d7d" stroke-width="1.05" fill="none" stroke-linecap="round" stroke-linejoin="round"/></svg>
<svg style="left:35px;top:328px" width="14" height="11" viewBox="0 0 14 11"><ellipse cx="11" cy="3" rx="3" ry="2.9" fill="#e4e8eb" stroke="#ccd1d5" stroke-width="0.5"/><ellipse cx="11" cy="3" rx="0.9" ry="0.8" fill="#fafafa" stroke="#c8c8c8" stroke-width="0.3"/><path d="M0.2,7 L2,3.8 L13.2,3.8 L13.9,7 Z" fill="#d4d6d8" opacity="0.9"/><rect x="0" y="6.8" width="14" height="3.9" rx="0.4" fill="#3a3a3a"/><rect x="0" y="6.8" width="14" height="0.9" fill="#6e6e6e"/></svg>
<div class="t" style="left:52.5px;top:329.5px;letter-spacing:-0.4px">Unità CD (E:) 2025</div>
<!-- Rete y=367.5 -->
<svg style="left:13px;top:365.6px" width="9" height="5" viewBox="0 0 9 5"><path d="M0.6,0.6 L4.5,4.2 L8.4,0.6" stroke="#1f1f1f" stroke-width="1.1" fill="none" stroke-linecap="round" stroke-linejoin="round"/></svg>
<svg style="left:34px;top:359px" width="16" height="16" viewBox="0 0 16 16"><rect x="1.2" y="3.8" width="14.4" height="10" rx="0.6" fill="url(#gMon)"/><path d="M7.7,13.8 L9.1,13.8 L9.1,15 L7.7,15 Z" fill="#8a949c"/><rect x="5.6" y="14.8" width="5.6" height="0.9" fill="#9aa2a8"/><circle cx="4" cy="4" r="3.8" fill="#3d8fd6"/><path d="M1.4,3.4 Q3,1.4 4.6,2.4 Q5.4,3.4 4,4.6 Q3,5.6 4.4,6.6 Q5.6,6.8 6.8,5.4" fill="none" stroke="#e6f2fc" stroke-width="1"/></svg>
<div class="t" style="left:52.5px;top:361.5px;transform:scaleX(0.885);transform-origin:left top">Rete</div>
<!-- VBOXSVR y=399.5 -->
<svg class="cr" style="left:23px;top:395.3px" width="5" height="9" viewBox="0 0 5 9"><path d="M0.6,0.6 L4.4,4.5 L0.6,8.4" stroke="#7d7d7d" stroke-width="1.05" fill="none" stroke-linecap="round" stroke-linejoin="round"/></svg>
<svg style="left:43px;top:393px" width="14" height="13" viewBox="0 0 14 13"><rect x="0" y="0" width="14" height="10" rx="0.6" fill="url(#gMon)"/><rect x="0" y="0" width="14" height="0.9" fill="#3a5568"/><path d="M6.3,10 L7.7,10 L7.7,11.9 L6.3,11.9 Z" fill="#7a858c"/><rect x="4.2" y="11.8" width="5.8" height="0.9" fill="#58646c"/></svg>
<div class="t" style="left:60.1px;top:393.5px;transform:scaleX(0.876);transform-origin:left top">VBOXSVR</div>
</div>
<!-- gutter + thumb -->
<div class="abs" style="left:139px;top:135px;width:17px;height:473px;background:#efefef"></div><div class="abs" style="left:156px;top:135px;width:1px;height:473px;background:#f8f8f8"></div>
<div class="abs" style="left:146px;top:305.5px;width:3px;height:284.5px;background:#8a8a8a;border-radius:1.5px"></div>

<!-- list header (win coords) -->
<svg style="left:305.5px;top:137px" width="6" height="3.4" viewBox="0 0 6 3.4"><path d="M0.4,3 L3,0.5 L5.6,3" stroke="#cfcfcf" stroke-width="0.8" fill="none"/></svg>
<div class="t hd" style="left:190.7px;top:142.84px;letter-spacing:-0.15px;color:#48587a">Nome</div>
<div class="abs" style="left:431px;top:135px;width:1px;height:26px;background:#e4e4e4"></div>
<div class="t hd" style="left:438.2px;top:142.84px;color:#3f4d70">Ultima modifica</div>
<div class="abs" style="left:575px;top:135px;width:1px;height:26px;background:#e4e4e4"></div>
<div class="t hd" style="left:582.3px;top:142.84px;letter-spacing:-0.08px;color:#48587a">Tipo</div>
<div class="abs" style="left:695px;top:135px;width:1px;height:26px;background:#e4e4e4"></div>
<div class="t hd" style="left:702.6px;top:142.84px;letter-spacing:-0.16px;color:#48587a">Dimensione</div>
<div class="abs" style="left:775px;top:135px;width:1px;height:26px;background:#e4e4e4"></div>
<!-- row 1 -->
<svg style="left:178.8px;top:174.1px" width="14.2" height="10.8" viewBox="0 0 14.2 10.8"><path d="M0,0.6 Q0,0 0.6,0 L4.6,0 L5.8,1.1 L13.6,1.1 Q14.2,1.1 14.2,1.7 L14.2,10.2 Q14.2,10.8 13.6,10.8 L0.6,10.8 Q0,10.8 0,10.2 Z" fill="#f6d684"/><path d="M0,2.3 L14.2,2.3 L14.2,10.2 Q14.2,10.8 13.6,10.8 L0.6,10.8 Q0,10.8 0,10.2 Z" fill="#fbe4a4"/></svg>
<div class="t" style="left:198.4px;top:174.84px;letter-spacing:-0.08px;color:#161616">.stfolder</div>
<div class="t" style="left:438.2px;top:174.84px;letter-spacing:-0.11px;color:#5e5e5e">20/08/2025 20:02</div>
<div class="t" style="left:582.3px;top:174.84px;letter-spacing:-0.12px;color:#5e5e5e">Cartella di file</div>
<!-- row 2 -->
<svg style="left:179.6px;top:201px" width="11" height="14" viewBox="0 0 11 14"><rect x="0.6" y="0.2" width="9.8" height="13.6" fill="#f6f6f6"/><path d="M0.7,0.2 L0.7,13.9" stroke="#8c8c8c" stroke-width="1.3"/><rect x="0.7" y="5" width="9.6" height="2" fill="#9a9a9a"/><rect x="0.7" y="10.9" width="9.6" height="1.7" fill="#9a9a9a"/><rect x="8.6" y="0.6" width="1.6" height="2.2" fill="#b8b8b8"/></svg>
<div class="t" style="left:198.2px;top:202.84px;color:#161616">testoprova</div>
<div class="t" style="left:438.2px;top:202.84px;letter-spacing:-0.11px;color:#5e5e5e">20/08/2025 20:16</div>
<div class="t" style="left:582.3px;top:202.84px;letter-spacing:-0.08px;color:#5e5e5e">Text Document</div>
<div class="t" style="left:745.6px;top:202.84px;transform:scaleX(0.83);transform-origin:left top;color:#5e5e5e">1 KB</div>
<!-- status bar -->
<div class="t" style="left:14.7px;top:614.84px;letter-spacing:-0.08px;color:#2b3350">2 elementi</div>
<div class="abs" style="left:80px;top:611px;width:1px;height:18px;background:#ececec"></div>
<div class="abs" style="left:1071px;top:608px;width:25px;height:25px;background:#e5f3fb"></div>
<svg style="left:1079px;top:616px" width="11" height="8" viewBox="0 0 11 8"><path d="M0,0.5 L11,0.5 M0,3.5 L11,3.5 M0,6.5 L11,6.5" stroke="#5a5a5a" stroke-width="1"/></svg>
<svg style="left:1103px;top:615px" width="12" height="11" viewBox="0 0 12 11"><path d="M0.5,9 L0.5,0.5 L11.5,0.5 L11.5,9" fill="none" stroke="#5a5a5a" stroke-width="1"/><path d="M0,10.5 L12,10.5" stroke="#5a5a5a" stroke-width="1"/></svg>


</div>
</body>
</html>
